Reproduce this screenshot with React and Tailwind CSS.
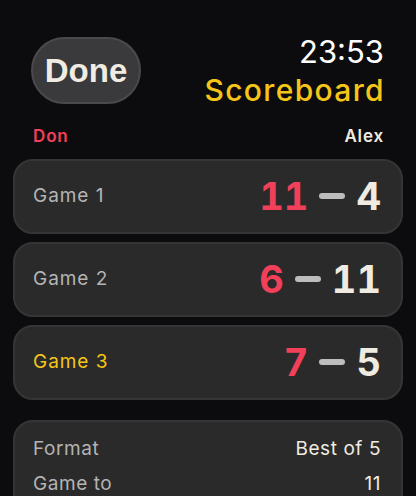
const games = [
  { label: 'Game 1', don: 11, alex: 4 },
  { label: 'Game 2', don: 6, alex: 11 },
  { label: 'Game 3', don: 7, alex: 5, current: true },
];

const GameRow = ({ g }) => (
  <div className="h-[75px] rounded-[20px] bg-[#2a2a2a] border-2 border-[#353535] flex items-center justify-between pl-[18px] pr-[20px]">
    <span className={`text-[19px] tracking-[0.05em] ${g.current ? 'text-[#f5c518]' : 'text-[#b4b4b4]'}`}>{g.label}</span>
    <div className="flex items-center tabular-nums">
      <span className="text-[38px] font-bold text-[#f2405a] leading-none">{g.don}</span>
      <span className="w-[26px] h-[6px] rounded-full bg-[#bdbdbd] mx-[11px]" />
      <span className="text-[38px] font-bold text-[#efebe0] leading-none">{g.alex}</span>
    </div>
  </div>
);

const App = () => (
  <div className="w-[416px] h-[496px] overflow-hidden bg-[#0c0c0e] px-[13px]" style={{ fontFamily: 'Inter, "Noto Sans", sans-serif' }}>
    <div className="flex items-start justify-between pt-[34px] pl-[18px] pr-[19px]">
      <button className="mt-[3px] w-[110px] h-[67px] rounded-full bg-[#3a3a3c] border-2 border-[#4a4a4c] flex items-center justify-center text-[33px] font-bold text-[#f0ece4]" style={{ fontFamily: '"Liberation Sans", Arial, sans-serif' }}>
        Done
      </button>
      <div className="flex flex-col items-end">
        <span className="text-[31px] text-white leading-[36px]">23:53</span>
        <span className="text-[30px] font-medium text-[#f5c518] leading-[36px] mt-[2px] tracking-[0.045em] mr-[-1px]">Scoreboard</span>
      </div>
    </div>
    <div className="flex justify-between pl-[20px] pr-[19px] mt-[16px] text-[17px] font-semibold tracking-[0.05em]">
      <span className="text-[#f2405a]">Don</span>
      <span className="text-[#efebe0]">Alex</span>
    </div>
    <div className="flex flex-col gap-[8px] mt-[9px]">
      {games.map((g) => <GameRow key={g.label} g={g} />)}
    </div>
    <div className="mt-[20px] rounded-[20px] bg-[#2a2a2a] border-2 border-[#353535] pl-[18px] pr-[20px] pt-[10px] pb-[10px] text-[19px] tracking-[0.03em]">
      <div className="flex justify-between h-[35px] items-center">
        <span className="text-[#b4b4b4]">Format</span>
        <span className="text-[#efebe0]">Best of 5</span>
      </div>
      <div className="flex justify-between h-[35px] items-center">
        <span className="text-[#b4b4b4]">Game to</span>
        <span className="text-[#efebe0]">11</span>
      </div>
    </div>
  </div>
);

export default App;
